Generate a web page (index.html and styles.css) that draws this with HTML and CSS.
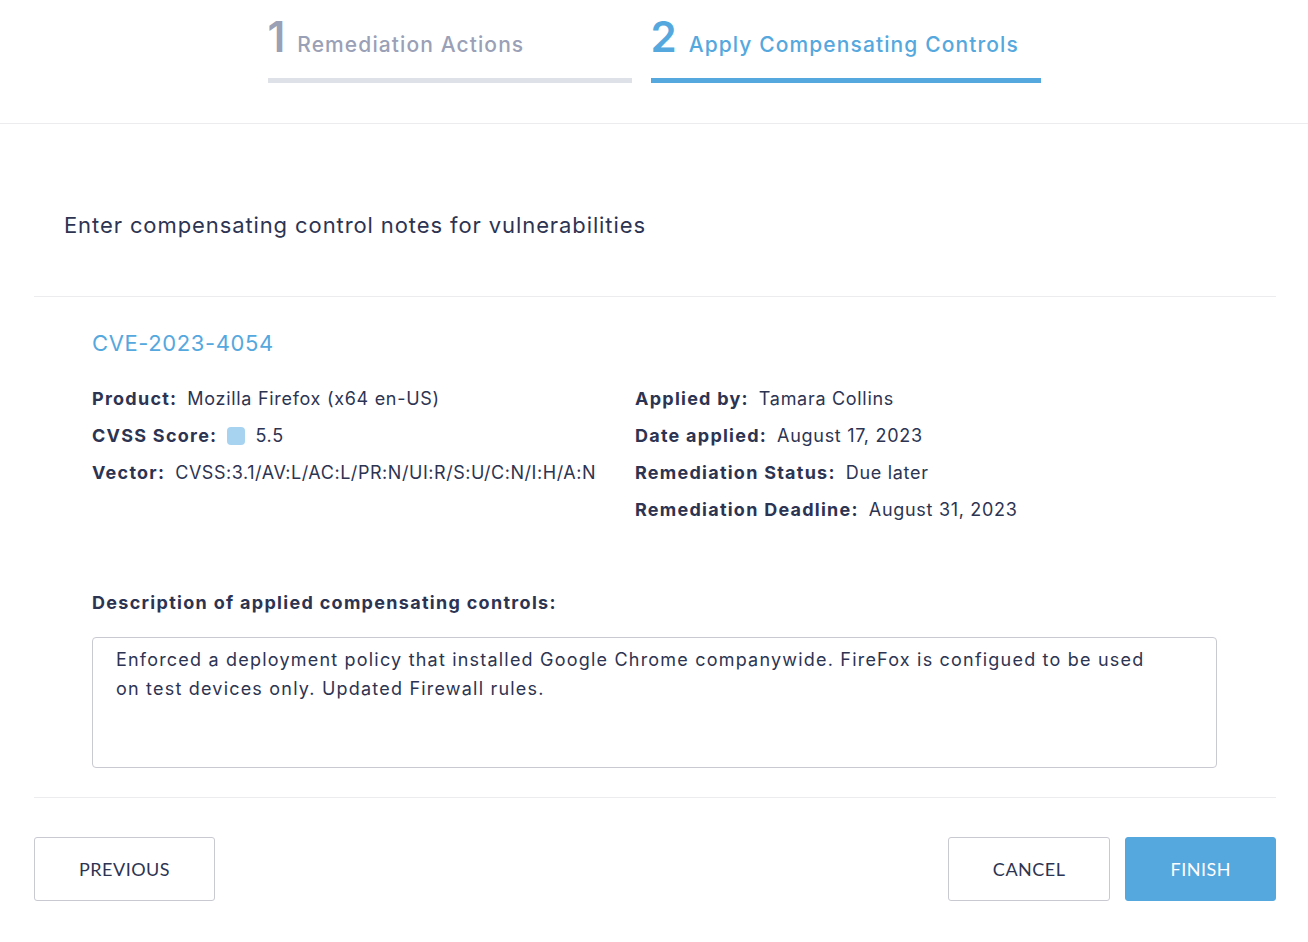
FILE: index.html
```html
<!DOCTYPE html>
<html lang="en">
<head>
<meta charset="utf-8">
<title>Apply Compensating Controls</title>
<link rel="stylesheet" href="styles.css">
</head>
<body>
<header class="stepper-bar">
  <div class="stepper">
    <div class="step step-done">
      <div class="step-head"><span class="step-num">1</span><span class="step-label">Remediation Actions</span></div>
      <div class="step-line"></div>
    </div>
    <div class="step step-active">
      <div class="step-head"><span class="step-num">2</span><span class="step-label">Apply Compensating Controls</span></div>
      <div class="step-line"></div>
    </div>
  </div>
</header>
<main class="content">
  <section class="intro">
    <h1 class="intro-title">Enter compensating control notes for vulnerabilities</h1>
  </section>
  <section class="vuln">
    <a class="cve-link" href="#">CVE-2023-4054</a>
    <div class="details">
      <dl class="col col-left">
        <div class="row"><dt>Product:</dt><dd>Mozilla Firefox (x64 en-US)</dd></div>
        <div class="row"><dt>CVSS Score:</dt><dd><span class="score-dot"></span>5.5</dd></div>
        <div class="row"><dt>Vector:</dt><dd class="vector">CVSS:3.1/AV:L/AC:L/PR:N/UI:R/S:U/C:N/I:H/A:N</dd></div>
      </dl>
      <dl class="col col-right">
        <div class="row"><dt>Applied by:</dt><dd>Tamara Collins</dd></div>
        <div class="row"><dt>Date applied:</dt><dd>August 17, 2023</dd></div>
        <div class="row"><dt>Remediation Status:</dt><dd>Due later</dd></div>
        <div class="row"><dt>Remediation Deadline:</dt><dd>August 31, 2023</dd></div>
      </dl>
    </div>
    <label class="desc-label">Description of applied compensating controls:</label>
    <div class="desc-box">Enforced a deployment policy that installed Google Chrome companywide. FireFox is configued to be used on test devices only. Updated Firewall rules.</div>
  </section>
  <footer class="actions">
    <button class="btn">PREVIOUS</button>
    <div class="actions-right">
      <button class="btn">CANCEL</button>
      <button class="btn btn-primary">FINISH</button>
    </div>
  </footer>
</main>
</body>
</html>
```
FILE: styles.css
```css
* { box-sizing: border-box; }
body {
  margin: 0;
  background: #ffffff;
  font-family: "Inter", "Open Sans", sans-serif;
  color: #2d3452;
}
.stepper-bar {
  height: 124px;
  border-bottom: 1px solid #ececef;
}
.stepper {
  display: flex;
  justify-content: center;
  gap: 19px;
  padding-top: 14px;
}
.step { display: flex; flex-direction: column; }
.step-done { width: 364px; }
.step-active { width: 390px; }
.step-head {
  display: flex;
  align-items: baseline;
  gap: 12px;
  height: 64px;
}
.step-num {
  font-size: 42px;
  font-weight: 600;
  line-height: 46px;
}
.step-label {
  font-size: 21px;
  font-weight: 500;
  letter-spacing: 1.1px;
}
.step-line { height: 5px; }
.step-done .step-num, .step-done .step-label { color: #9aa0b6; }
.step-done .step-line { background: #dfe1e9; }
.step-active .step-num, .step-active .step-label { color: #55a8de; }
.step-active .step-line { background: #55a8de; }

.content { padding: 0 32px 0 34px; }
.intro {
  height: 173px;
  border-bottom: 1px solid #ececef;
  padding: 87px 0 0 30px;
}
.intro-title {
  margin: 0;
  font-size: 22px;
  font-weight: 400;
  line-height: 28px;
  letter-spacing: 0.9px;
}
.vuln {
  padding: 32px 59px 29px 58px;
  border-bottom: 1px solid #ececef;
}
.cve-link {
  display: block;
  color: #55a8de;
  text-decoration: none;
  font-size: 22px;
  line-height: 28px;
  letter-spacing: 0.6px;
}
.details {
  display: flex;
  margin-top: 29px;
}
.col { margin: 0; display: flex; flex-direction: column; gap: 11px; }
.col-left { width: 543px; }
.row { display: flex; align-items: center; font-size: 18px; line-height: 26px; }
.row dt { font-weight: 700; margin-right: 10px; letter-spacing: 1.25px; }
.row dd { margin: 0; letter-spacing: 0.7px; }
.row dd.vector { letter-spacing: 0.55px; }
.score-dot {
  display: inline-block;
  width: 18px;
  height: 18px;
  border-radius: 4px;
  background: #a7d3f0;
  margin: 0 10px 0 0;
  vertical-align: -3px;
}
.desc-label {
  display: block;
  margin-top: 67px;
  font-size: 18px;
  font-weight: 700;
  line-height: 26px;
  letter-spacing: 1.3px;
}
.desc-box {
  margin-top: 21px;
  height: 131px;
  border: 1px solid #c9c9d2;
  border-radius: 4px;
  padding: 7px 52px 0 23px;
  font-size: 18px;
  line-height: 29px;
  letter-spacing: 1.2px;
}
.actions {
  display: flex;
  justify-content: space-between;
  padding-top: 39px;
}
.actions-right { display: flex; gap: 15px; }
.btn {
  height: 64px;
  padding: 0 44px;
  border: 1px solid #c9c9d2;
  border-radius: 3px;
  background: #ffffff;
  color: #2d3452;
  font-family: "Lato", sans-serif;
  font-size: 18px;
  letter-spacing: 0.5px;
}
.btn-primary {
  background: #55a8de;
  border-color: #55a8de;
  color: #ffffff;
}
```
